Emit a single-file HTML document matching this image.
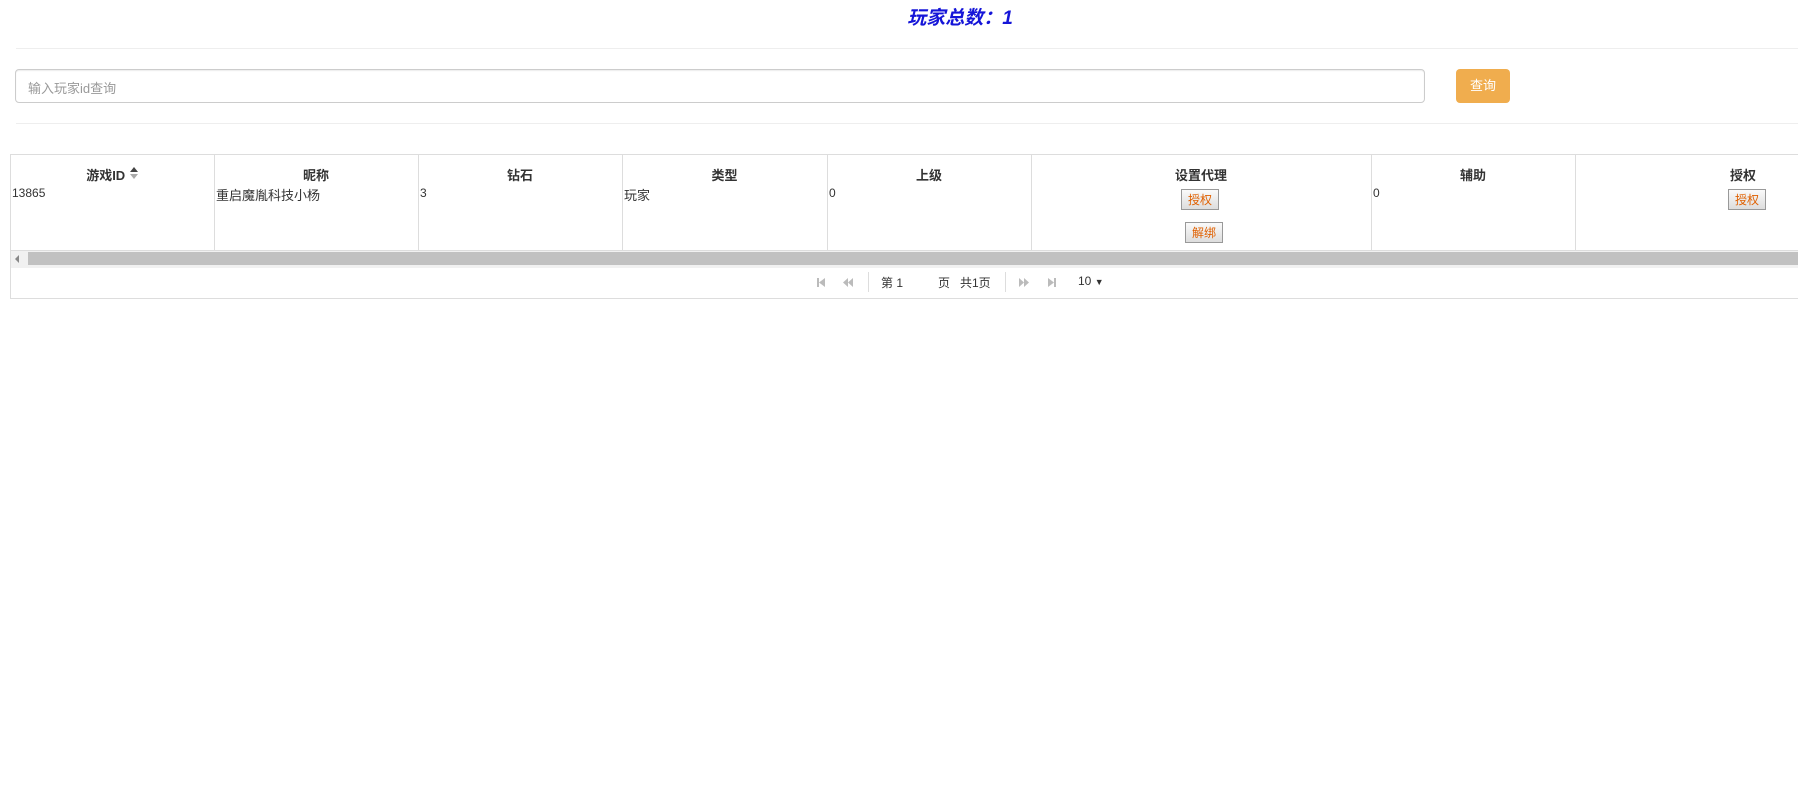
<!DOCTYPE html>
<html><head><meta charset="utf-8"><style>
body{margin:0;width:1798px;height:790px;overflow:hidden;background:#fff;font-family:"Liberation Sans","Noto Sans CJK SC",sans-serif;color:#333;position:relative}
.a{position:absolute}
.title{left:0;width:1920px;top:3px;text-align:center;font-size:19px;font-weight:bold;font-style:italic;color:#1515d8}
.hr{left:16px;right:0;height:1px;background:#eee}
.inp{left:15px;top:69px;width:1408px;height:32px;border:1px solid #ccc;border-radius:4px;box-shadow:inset 0 1px 1px rgba(0,0,0,.075)}
.inp span{position:absolute;left:12px;top:8px;font-size:13px;color:#999}
.btn{left:1456px;top:69px;width:54px;height:34px;background:#f0ad4e;border-radius:4px;color:#fff;font-size:13px;text-align:center;line-height:34px}
.tbl{left:10px;top:154px;width:1900px;height:143px;border:1px solid #ddd;border-right:none}
.vl{top:155px;height:95px;width:1px;background:#ddd}
.th{top:165px;font-size:13px;font-weight:bold;text-align:center}
.td{top:186px;font-size:12px}
.b{font-size:12px;color:#e06000;border:1px solid #999;background:linear-gradient(#fafafa,#ddd);width:38px;height:21px;text-align:center;line-height:21px;box-sizing:border-box}
.pg{top:274px;font-size:12px;color:#333}
.ic{top:277px}
</style></head><body>
<div class="a title">玩家总数：1</div>
<div class="a hr" style="top:48px"></div>
<div class="a inp"><span>输入玩家id查询</span></div>
<div class="a btn">查询</div>
<div class="a hr" style="top:123px"></div>
<div class="a tbl"></div>
<div class="a vl" style="left:214px"></div><div class="a vl" style="left:418px"></div><div class="a vl" style="left:622px"></div><div class="a vl" style="left:827px"></div><div class="a vl" style="left:1031px"></div><div class="a vl" style="left:1371px"></div><div class="a vl" style="left:1575px"></div>
<div class="a th" style="left:11px;width:203px">游戏ID <svg width="10" height="14" viewBox="0 0 10 14" style="vertical-align:0"><path d="M1 6L5 1L9 6Z" fill="#444"/><path d="M1 8L5 13L9 8Z" fill="#aaa"/></svg></div>
<div class="a th" style="left:214px;width:204px">昵称</div>
<div class="a th" style="left:418px;width:204px">钻石</div>
<div class="a th" style="left:622px;width:205px">类型</div>
<div class="a th" style="left:827px;width:204px">上级</div>
<div class="a th" style="left:1031px;width:340px">设置代理</div>
<div class="a th" style="left:1371px;width:204px">辅助</div>
<div class="a th" style="left:1575px;width:336px">授权</div>
<div class="a td" style="left:12px">13865</div>
<div class="a td" style="left:216px;font-size:13px;top:185px">重启魔胤科技小杨</div>
<div class="a td" style="left:420px">3</div>
<div class="a td" style="left:624px;font-size:13px;top:185px">玩家</div>
<div class="a td" style="left:829px">0</div>
<div class="a td" style="left:1373px">0</div>
<div class="a b" style="left:1181px;top:189px">授权</div>
<div class="a b" style="left:1185px;top:222px">解绑</div>
<div class="a b" style="left:1728px;top:189px">授权</div>
<div class="a" style="left:11px;top:250px;width:1787px;height:17px;background:#f1f1f1;border-top:1px solid #ddd"></div>
<div class="a" style="left:28px;top:252px;width:1770px;height:13px;background:#c1c1c1"></div>
<svg class="a" style="left:14px;top:255px" width="6" height="8"><path d="M5 0L1 4L5 8Z" fill="#888"/></svg>
<svg class="a ic" style="left:816px" width="10" height="11"><rect x="1" y="1" width="2" height="9" fill="#bbb"/><path d="M9 1L3 5.5L9 10Z" fill="#bbb"/></svg>
<svg class="a ic" style="left:842px" width="12" height="11"><path d="M6 1L1 5.5L6 10Z M11 1L6 5.5L11 10Z" fill="#bbb"/></svg>
<div class="a" style="left:868px;top:272px;width:1px;height:20px;background:#ddd"></div>
<div class="a pg" style="left:881px">第 1</div>
<div class="a pg" style="left:938px">页&nbsp;&nbsp;&nbsp;共1页</div>
<div class="a" style="left:1005px;top:272px;width:1px;height:20px;background:#ddd"></div>
<svg class="a ic" style="left:1018px" width="12" height="11"><path d="M1 1L6 5.5L1 10Z M6 1L11 5.5L6 10Z" fill="#bbb"/></svg>
<svg class="a ic" style="left:1047px" width="10" height="11"><path d="M1 1L7 5.5L1 10Z" fill="#bbb"/><rect x="7" y="1" width="2" height="9" fill="#bbb"/></svg>
<div class="a pg" style="left:1078px">10 <span style="font-size:9px">▼</span></div>
</body></html>
